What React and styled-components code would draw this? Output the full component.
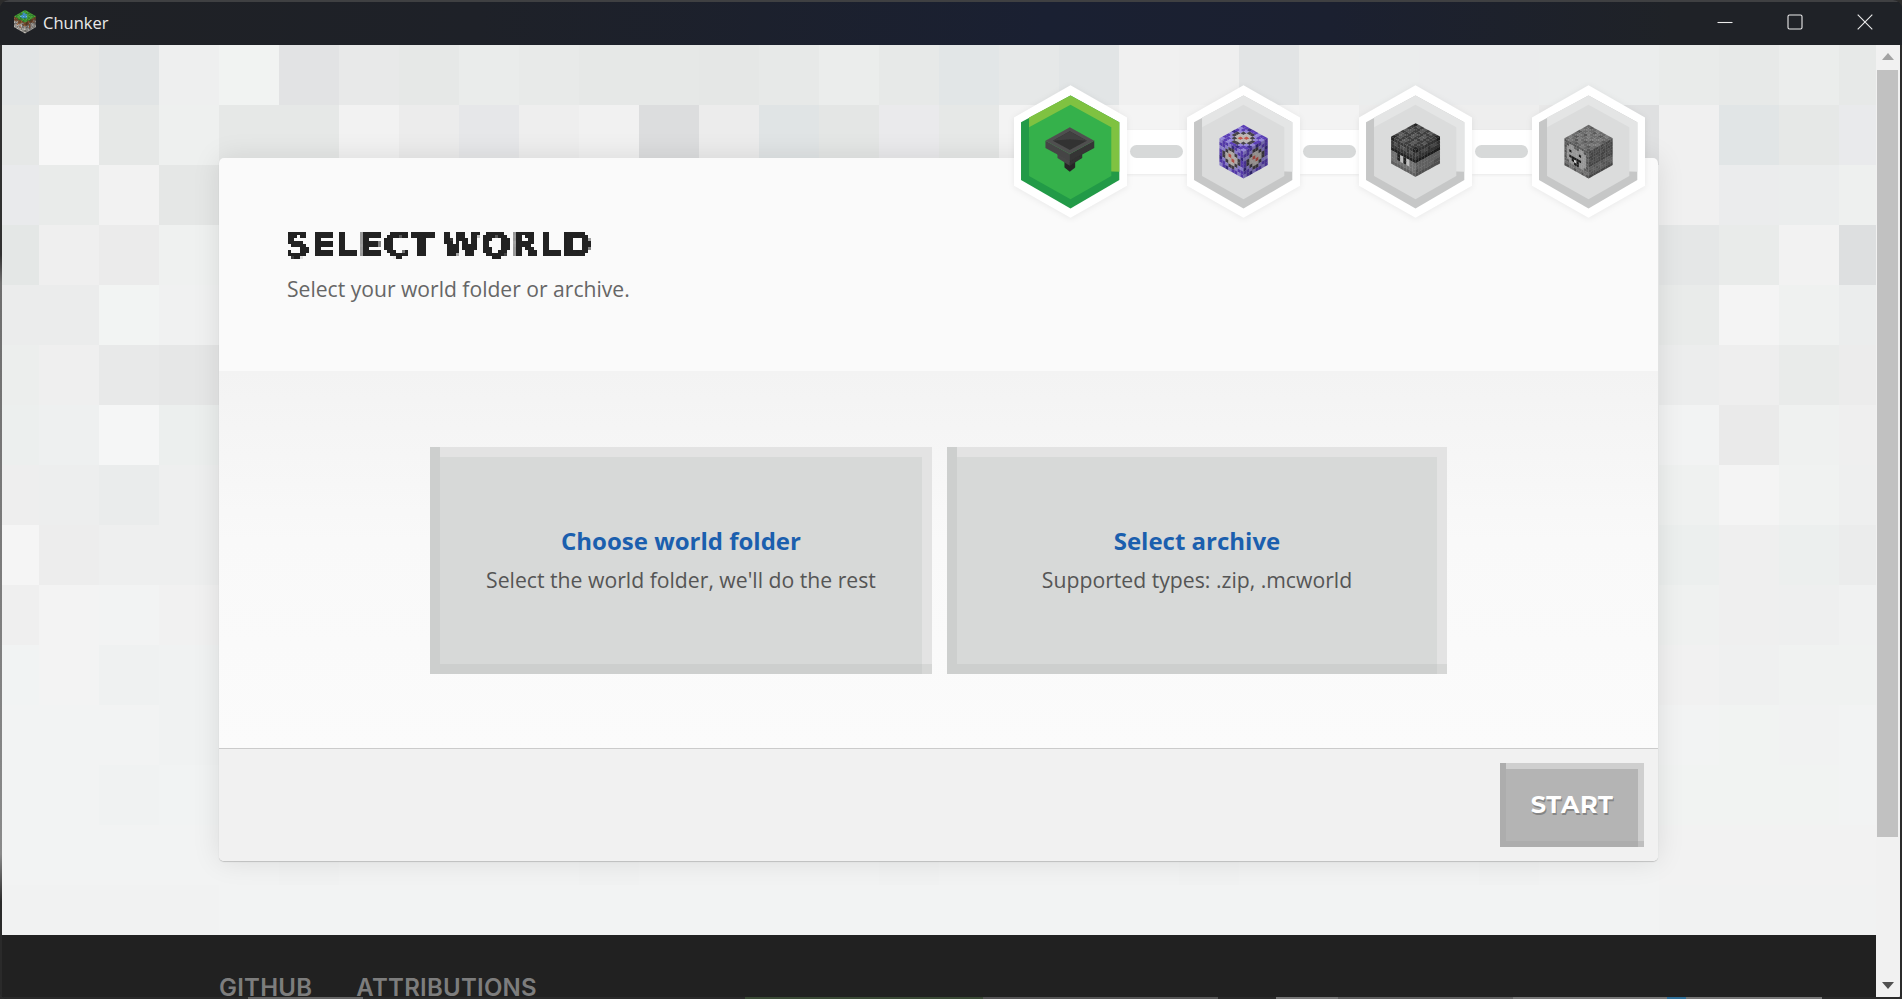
import React from "react";
import styled, { createGlobalStyle } from "styled-components";

const Global = createGlobalStyle`
  html, body { margin: 0; padding: 0; height: 100%; overflow: hidden; background: #2c2c2c; }
  #root { height: 100%; }
  * { box-sizing: border-box; }
`;

const Desktop = styled.div`
  width: 1902px;
  height: 999px;
  display: flex;
  flex-direction: column;
  overflow: hidden;
  border-radius: 9px 9px 8px 8px;
  background: #1f2227;
`;
const TitleBar = styled.header`
  flex: 0 0 45px;
  display: flex;
  align-items: center;
  padding: 0 0 3px 14px;
  border-top: 2px solid #3f4042;
  background: linear-gradient(90deg, #1f2125 0%, #1e2128 25%, #1a2032 55%, #1b2030 70%, #1f2227 88%, #1f2227 100%);
`;
const AppIcon = styled.svg`
  width: 22px;
  height: 24px;
  flex: none;
`;
const AppName = styled.span`
  margin-left: 7px;
  font: 400 16.5px "Open Sans", sans-serif;
  color: #e9e9e9;
  flex: 1;
`;
const WinButton = styled.button`
  width: 70px;
  height: 40px;
  border: 0;
  padding: 0;
  background: none;
  display: flex;
  align-items: center;
  justify-content: center;
  margin-right: ${(p) => p.$mr || 0}px;
`;
const WinGlyph = styled.svg`
  width: 16px;
  height: 16px;
  stroke: #ececec;
  stroke-width: 1.1;
  fill: none;
`;
const BodyRow = styled.div`
  flex: 0 0 952px;
  display: flex;
  min-height: 0;
`;
const EdgeLeft = styled.div`
  flex: 0 0 2px;
  background: linear-gradient(#303030 0, #303030 22%, #6e6e6e 25%, #8a8a8a 85%, #2a2a2a 90%);
`;
const Main = styled.main`
  flex: 0 0 1874px;
  height: 952px;
  overflow: hidden;
  display: grid;
  grid-template: 1fr / 1fr;
`;
const Mosaic = styled.div`
  grid-area: 1 / 1;
  display: grid;
  grid-template-columns: 37px repeat(31, 60px);
  grid-auto-rows: 60px;
  align-self: start;
  width: 1874px;
  height: 890px;
  overflow: hidden;
`;
const Tile = styled.div`
  background: ${(p) => p.$c};
`;
const Page = styled.div`
  grid-area: 1 / 1;
  display: flex;
  flex-direction: column;
  min-width: 0;
`;
const Hero = styled.section`
  flex: 0 0 890px;
  padding: 113px 0 0 217px;
`;
const Card = styled.div`
  position: relative;
  width: 1439px;
  height: 703px;
  display: flex;
  flex-direction: column;
  border-radius: 5px;
  background: #fafafa;
  box-shadow: 0 0 28px rgba(0, 0, 0, 0.1), 0 1px 1px rgba(0, 0, 0, 0.18);
`;
const CardHead = styled.div`
  flex: 0 0 213px;
  padding: 68px 0 0 66px;
`;
const Title = styled.h1`
  margin: 0;
  font: 700 35px/38px "DejaVu Sans", sans-serif;
  letter-spacing: 0.8px;
  word-spacing: -6px;
  color: #222;
  -webkit-text-stroke: 0.7px #222;
  filter: url(#pixelate);
  width: 400px;
`;
const Subtitle = styled.p`
  margin: 11px 0 0 2px;
  font: 400 21.1px/28px "Open Sans", sans-serif;
  color: #666;
`;
const CardBody = styled.div`
  flex: 0 0 377px;
  padding-top: 76px;
  display: flex;
  justify-content: center;
  gap: 15px;
  align-items: flex-start;
  background: linear-gradient(#f3f3f3 0, #f9f9f9 45%, #fbfbfb 100%);
`;
const Choice = styled.button`
  position: relative;
  width: ${(p) => p.$w}px;
  height: 227px;
  border: 0;
  padding: 0;
  display: flex;
  flex-direction: column;
  align-items: center;
  justify-content: center;
  background: #d7d9d8;
  box-shadow: inset 10px 0 0 #cdcfce, inset 0 10px 0 #e3e3e3, inset -10px 0 0 #e3e3e3, inset 0 -10px 0 #cdcfce;
  &::after {
    content: "";
    position: absolute;
    right: 0;
    bottom: 0;
    width: 10px;
    height: 10px;
    background: #d6d7d6;
  }
`;
const ChoiceTitle = styled.span`
  font: 700 24px/32px "Open Sans", sans-serif;
  color: #1b5fae;
  margin-bottom: 7px;
`;
const ChoiceText = styled.span`
  font: 400 21.2px/32px "Open Sans", sans-serif;
  color: #555;
`;
const CardFoot = styled.div`
  flex: 1;
  border-top: 1px solid #cbcbcb;
  border-radius: 0 0 5px 5px;
  background: #f1f1f1;
  display: flex;
  justify-content: flex-end;
  padding: 14px 14px 0 0;
`;
const StartButton = styled.button`
  position: relative;
  width: 144px;
  height: 84px;
  border: 0;
  padding: 0 0 2px;
  background: #b4b4b4;
  box-shadow: inset 6px 0 0 #adadad, inset 0 6px 0 #cfcfcf, inset -6px 0 0 #cfcfcf, inset 0 -6px 0 #adadad;
  font: 700 24px "Montserrat", "Inter", sans-serif;
  letter-spacing: 0.6px;
  color: #fff;
  text-shadow: 1px 2px 0 #858585;
  &::after {
    content: "";
    position: absolute;
    right: 0;
    bottom: 0;
    width: 6px;
    height: 6px;
    background: #bebebe;
  }
`;
const Footer = styled.footer`
  flex: 1;
  background: #212121;
  padding: 44px 0 0 217px;
  display: flex;
  gap: 44px;
`;
const FootLink = styled.a`
  font: 600 24px/17px "Inter", sans-serif;
  letter-spacing: 0.25px;
  color: #7d7d7d;
`;
const Scrollbar = styled.aside`
  flex: 0 0 24px;
  background: #f1f1f1;
  display: flex;
  flex-direction: column;
  align-items: center;
  padding: 8px 0 8px;
`;
const Arrow = styled.svg`
  width: 12px;
  height: 7px;
  flex: none;
  fill: ${(p) => p.$c};
`;
const Thumb = styled.div`
  width: 21px;
  height: 767px;
  margin-top: 10px;
  margin-left: -1px;
  background: #c1c1c1;
  flex: none;
`;
const ThumbGap = styled.div`
  flex: 1;
`;
const EdgeRight = styled.div`
  flex: 0 0 2px;
  background: #2b2b2b;
`;
const BottomEdge = styled.div`
  flex: 0 0 2px;
  background: linear-gradient(90deg,
    #2a2a2a 248px, #666 248px, #666 363px, #2a2a2a 363px, #2a2a2a 745px,
    #3a4a35 745px, #3a4a35 983px, #555 983px, #555 1218px, #2a2a2a 1218px, #2a2a2a 1276px,
    #777 1276px, #777 1338px, #5e5e5e 1338px, #5e5e5e 1513px, #777 1513px, #777 1667px,
    #2f6f99 1667px, #2f6f99 1686px, #777 1686px, #777 1822px, #2a2a2a 1822px);
`;
const FilterDefs = styled.svg`
  width: 0;
  height: 0;
  flex: none;
`;
const Stepper = styled.div`
  position: absolute;
  top: -73px;
  right: 13.5px;
  display: flex;
  align-items: center;
`;
const Hexagon = styled.svg`
  width: 113px;
  height: 133px;
  flex: none;
  position: relative;
  filter: drop-shadow(0 1px 3px rgba(0, 0, 0, 0.07));
`;
const Connector = styled.div`
  width: 59.5px;
  height: 44px;
  background: #fff;
  display: flex;
  align-items: center;
  justify-content: center;
  box-shadow: 0 1px 3px rgba(0, 0, 0, 0.07);
`;
const ConnectorPill = styled.div`
  width: 53px;
  height: 13px;
  border-radius: 7px;
  background: #d7d9d9;
`;

const LEFT = [
  ["e3e6e7", "e6e7e6", "e1e4e5", "eeefef"], ["e6e8e7", "f7f7f7", "e6e8e7", "eef0ef"],
  ["e9eaec", "e9ebea", "f2f2f2", "e5e7e6"], ["e4e7e6", "efefef", "ebebeb", "eff1f0"],
  ["ebecec", "ebecec", "f2f4f3", "f0f1f1"], ["eceeed", "efefef", "e8e9e9", "e6e7e7"],
  ["ecefee", "eef0f0", "f5f6f6", "ecefee"], ["eeeeee", "edeeee", "eaecec", "eeefef"],
  ["f5f5f5", "ededed", "eeefef", "eeefef"], ["efefef", "f3f3f3", "f2f3f3", "f1f1f1"],
  ["f1f3f3", "f3f3f3", "eff1f1", "f0f2f2"], ["f2f3f3", "f2f3f3", "f2f3f3", "f0f2f2"],
  ["f2f3f3", "f2f3f3", "f0f2f2", "f1f3f3"], ["f2f3f3", "f2f3f3", "f2f3f3", "f2f3f3"],
  ["f1f2f2", "f1f2f2", "f1f2f2", "f1f2f2"],
];
const RIGHT = [
  ["e9ebea", "e7e9e8", "ebedec", "e7e9e8"], ["f0f0f0", "e1e5e6", "e6e8e7", "e9eaec"],
  ["f0f0f0", "ebeced", "ebeded", "eef0ef"], ["e5e7e7", "e9ebea", "f2f2f2", "dddfe0"],
  ["e9ebea", "f4f4f4", "eff1f0", "ebeded"], ["eceded", "eeeeee", "e9ebea", "ececec"],
  ["f2f3f3", "eaeaea", "eff1f0", "efefef"], ["eff1f0", "f4f4f4", "f0f2f1", "eeefef"],
  ["ecefee", "efefef", "ecefee", "ebecec"], ["eff1f0", "efefef", "eeefef", "f0f1f1"],
  ["f1f1f1", "eff0f0", "f0f2f1", "f0f2f1"], ["f2f3f3", "f1f3f2", "f1f2f2", "f2f3f3"],
  ["f1f3f2", "f1f3f2", "f1f3f2", "f2f3f3"], ["f2f2f2", "f2f2f2", "f2f2f2", "f2f2f2"],
  ["f1f2f2", "f1f2f2", "f1f2f2", "f1f2f2"],
];
const TOP0 = ["f1f3f2", "e2e3e4", "e8e9e9", "e6e8e7", "eaeceb", "e8eae9", "e6e8e7", "e6e8e7", "e5e7e6", "e7e9e8", "ebedec", "e7e9e8", "e2e6e7", "e6e8e8", "e2e5e6", "f0f0f0", "efefef", "e2e4e5", "ecedec", "ebeded", "ebeced", "ebeced", "ebeded", "ebeded"];
const TOP1 = ["e6e8e7", "e6e8e7", "f2f2f2", "ececec", "e6e7e9", "eeeeee", "f1f1f1", "dcddde", "ececec", "e0e4e5", "e4e6e5", "eaeaec", "e6e8e7", "f3f3f3", "f1f1f1", "f4f4f4", "f2f2f2", "f4f4f4", "f3f3f3", "ececec", "eeeeee", "eeeeee", "e9e9e9", "dfe0e1"];

const tileColor = (r, c) => {
  if (c < 4) return "#" + LEFT[r][c];
  if (c >= 28) return "#" + RIGHT[r][c - 28];
  if (r === 0) return "#" + TOP0[c - 4];
  if (r === 1) return "#" + TOP1[c - 4];
  return r === 13 && c % 5 === 0 ? "#f1f2f2" : "#f2f3f3";
};

const Face = ({ o, u, v, rows, pal, shade }) => {
  const n = rows.length;
  const m = rows[0].length;
  return (
    <g transform={`matrix(${u[0] / m} ${u[1] / m} ${v[0] / n} ${v[1] / n} ${o[0]} ${o[1]})`}>
      {rows.map((row, j) =>
        row.split("").map((ch, i) => (
          <rect key={`${i}-${j}`} x={i} y={j} width={1.04} height={1.04} fill={pal[ch]} />
        ))
      )}
      {shade ? <rect width={m} height={n} fill="#000" opacity={shade} /> : null}
    </g>
  );
};

const Cube = ({ cx, top, hw = 72, dy = 40, h = 80, topRows, leftRows, rightRows, pal }) => {
  const l = cx - hw;
  const midY = top + dy;
  return (
    <g filter="url(#soft)">
      <Face o={[l, midY]} u={[hw, -dy]} v={[hw, dy]} rows={topRows} pal={pal} />
      <Face o={[l, midY]} u={[hw, dy]} v={[0, h]} rows={leftRows} pal={pal} shade={0.08} />
      <Face o={[cx, midY + dy]} u={[hw, -dy]} v={[0, h]} rows={rightRows} pal={pal} shade={0.22} />
    </g>
  );
};

const TONES = {
  green: { main: "#35b14b", light: "#7fc241", dark: "#229a47" },
  gray: { main: "#dbdcdc", light: "#e4e5e5", dark: "#c6c7c7" },
};

const Hex = ({ tone, children }) => {
  const t = TONES[tone];
  return (
    <Hexagon viewBox="42 46 338 397">
      <polygon points="211,46 380,143 380,347 211,443 42,347 42,143" fill="#fff" />
      <polygon points="211,77 357,157 357,330 211,415 63,330 63,157" fill={t.dark} />
      <polygon points="87,143 211,77 357,157 357,305 211,300 87,200" fill={t.light} />
      <polygon points="211,105 333,172 333,318 211,387 87,318 87,172" fill={t.main} />
      {children}
    </Hexagon>
  );
};

const Hopper = () => (
  <g filter="url(#soft)">
    <polygon points="193,275 193,292 209,305 225,292 225,275" fill="#262626" />
    <polygon points="172,238 172,264 209,287 209,255" fill="#474747" />
    <polygon points="246,238 246,264 209,287 209,255" fill="#303030" />
    <polygon points="136,212 136,234 209,274 209,252" fill="#454545" />
    <polygon points="282,212 282,234 209,274 209,252" fill="#343434" />
    <polygon points="209,172 282,212 209,252 136,212" fill="#505050" />
    <polygon points="209,184 260,212 209,240 158,212" fill="#333" />
    <polygon points="209,184 260,212 209,208 158,212" fill="#3f3f3f" />
  </g>
);

const CMD = { P: "#5a3eb6", L: "#9486da", D: "#3a2a85", G: "#bcb7b4", R: "#c2564c", K: "#454049" };
const CMD_ROWS = ["LPPLDPLP", "PPLKKLPP", "LLKGGKLD", "PKGRGGKP", "PKGGRGKP", "DLKGGKLL", "PPLKKLPP", "LPDLPPLP"];

const CHEST = { K: "#262626", D: "#3e3e3e", M: "#5a5a5a", L: "#7a7a7a", W: "#cfcfcf", B: "#666" };
const CHEST_TOP = ["KDMDMDDK", "DMMDMMDM", "DDDDDDDD", "MMDMMDMM", "DDDDDDDD", "DMMDMMDM", "DDDDDDDD", "KDDMDDDK"];
const CHEST_LEFT = ["KDDDDDDK", "DMDMMDMD", "DDDDDDDD", "KKKKKKKK", "LLKWKWLL", "LLKWKWLL", "LLLLLLLL", "BBBBBBBB"];
const CHEST_RIGHT = ["KDDDDDDK", "MDMMDMMD", "DDDDDDDD", "KKKKKKKK", "LLLLLLLL", "LLLLLLLL", "BLLLLLBB", "BBBBBBBB"];

const DISP = { C: "#6a6a6a", E: "#585858", F: "#7a7a7a", H: "#a2a2a2", K: "#222", W: "#ddd" };
const DISP_TOP = ["CFCCEFCC", "FCEFCCFE", "CEFCEFCC", "EFCCFCEF", "CCEFCCFC", "FCCEFCEC", "CEFCCFCF", "ECCFCECC"];
const DISP_LEFT = ["ECECEECECE", "CEHHCEHHEC", "EHHHHHHHHE", "CHKHHHKHHC", "EHHHHHHHHE", "CHKKKKKHHC", "EHHKWKHHHE", "CCHHKKHHCC", "FFFFFFFFFF", "EEFFEFFEFE"];
const DISP_RIGHT = ["ECEECECEEC", "CEECEECECE", "EEEEECEEEE", "CEECEEEECE", "ECECEECECE", "EEEEEEEEEE", "FFCFFCFFFC", "CFFCFFCCFF", "FCCFCFFCCF", "EEEEEEEEEE"];

const GRASS = { g: "#2f8f2a", G: "#4fb03a", B: "#3a9ad9", b: "#6ec6e8", N: "#7c5233", O: "#a9693c", S: "#b9b5ae", s: "#85817b", W: "#d8d4cc", R: "#c06a3a" };
const GRASS_TOP = ["GgGGgGGg", "gGGgGBGG", "GGbBBbgG", "GgBbBBGg", "gGBBbGGG", "GGgBGGgG", "gGGGgGGg", "GGgGGGgG"];
const GRASS_LEFT = ["NONgNONO", "ONNONOSN", "NOSNOSNO", "SWSOSWsW", "WsRWSWsS", "sWWSRSWW", "SWsWWsWs", "WSWSWWSW"];
const GRASS_RIGHT = ["ONOgNOON", "NNOONNON", "ONOSNOSN", "WSsOWSOS", "SsWRSWSs", "WWSRSWWs", "sWWsWSWS", "WSWWSWSW"];

export default function App() {
  const rows = Array.from({ length: 15 });
  const cols = Array.from({ length: 32 });
  return (
    <>
      <Global />
      <Desktop>
        <FilterDefs aria-hidden="true">
          <defs>
            <filter id="pixelate" x="0" y="0" width="100%" height="100%" colorInterpolationFilters="sRGB">
              <feFlood x="1" y="1" width="1" height="1" floodColor="#000" />
              <feComposite width="3" height="3" />
              <feTile result="grid" />
              <feComposite in="SourceGraphic" in2="grid" operator="in" />
              <feMorphology operator="dilate" radius="1" />
              <feComponentTransfer>
                <feFuncA type="linear" slope="6" intercept="-2" />
              </feComponentTransfer>
            </filter>
            <filter id="soft" x="-5%" y="-5%" width="110%" height="110%">
              <feGaussianBlur stdDeviation="1.3" />
            </filter>
          </defs>
        </FilterDefs>
        <TitleBar>
          <AppIcon viewBox="42 30 66 72">
            <Cube cx={75} top={30} hw={33} dy={19} h={32} topRows={GRASS_TOP} leftRows={GRASS_LEFT} rightRows={GRASS_RIGHT} pal={GRASS} />
          </AppIcon>
          <AppName>Chunker</AppName>
          <WinButton aria-label="Minimize">
            <WinGlyph viewBox="0 0 16 16"><path d="M0.5 8.5h15" /></WinGlyph>
          </WinButton>
          <WinButton aria-label="Maximize">
            <WinGlyph viewBox="0 0 16 16"><rect x="1" y="1" width="14" height="14" rx="1.5" /></WinGlyph>
          </WinButton>
          <WinButton aria-label="Close" $mr={2}>
            <WinGlyph viewBox="0 0 16 16"><path d="M0.7 0.7l14.6 14.6M15.3 0.7L0.7 15.3" /></WinGlyph>
          </WinButton>
        </TitleBar>
        <BodyRow>
          <EdgeLeft />
          <Main>
            <Mosaic>
              {rows.map((_, r) => cols.map((__, c) => <Tile key={`${r}-${c}`} $c={tileColor(r, c)} />))}
            </Mosaic>
            <Page>
              <Hero>
                <Card>
                  <CardHead>
                    <Title>SELECT WORLD</Title>
                    <Subtitle>Select your world folder or archive.</Subtitle>
                  </CardHead>
                  <CardBody>
                    <Choice $w={502}>
                      <ChoiceTitle>Choose world folder</ChoiceTitle>
                      <ChoiceText>Select the world folder, we'll do the rest</ChoiceText>
                    </Choice>
                    <Choice $w={500}>
                      <ChoiceTitle>Select archive</ChoiceTitle>
                      <ChoiceText>Supported types: .zip, .mcworld</ChoiceText>
                    </Choice>
                  </CardBody>
                  <CardFoot>
                    <StartButton>START</StartButton>
                  </CardFoot>
                  <Stepper>
                    <Hex tone="green"><Hopper /></Hex>
                    <Connector><ConnectorPill /></Connector>
                    <Hex tone="gray">
                      <Cube cx={211} top={165} topRows={CMD_ROWS} leftRows={CMD_ROWS} rightRows={CMD_ROWS} pal={CMD} />
                    </Hex>
                    <Connector><ConnectorPill /></Connector>
                    <Hex tone="gray">
                      <Cube cx={211} top={160} hw={73} topRows={CHEST_TOP} leftRows={CHEST_LEFT} rightRows={CHEST_RIGHT} pal={CHEST} />
                    </Hex>
                    <Connector><ConnectorPill /></Connector>
                    <Hex tone="gray">
                      <Cube cx={211} top={165} topRows={DISP_TOP} leftRows={DISP_LEFT} rightRows={DISP_RIGHT} pal={DISP} />
                    </Hex>
                  </Stepper>
                </Card>
              </Hero>
              <Footer>
                <FootLink>GITHUB</FootLink>
                <FootLink>ATTRIBUTIONS</FootLink>
              </Footer>
            </Page>
          </Main>
          <Scrollbar>
            <Arrow viewBox="0 0 12 7" $c="#a3a3a3"><polygon points="6,0 12,7 0,7" /></Arrow>
            <Thumb />
            <ThumbGap />
            <Arrow viewBox="0 0 12 7" $c="#505050"><polygon points="0,0 12,0 6,7" /></Arrow>
          </Scrollbar>
          <EdgeRight />
        </BodyRow>
        <BottomEdge />
      </Desktop>
    </>
  );
}
